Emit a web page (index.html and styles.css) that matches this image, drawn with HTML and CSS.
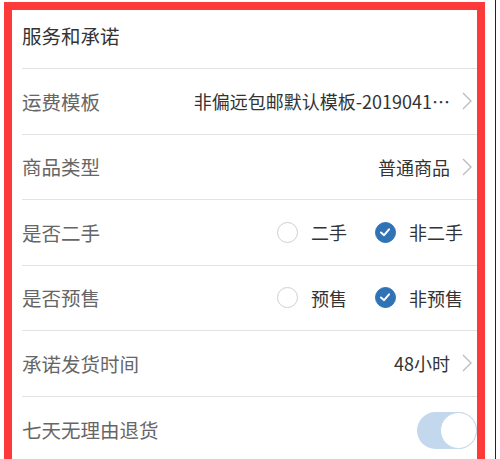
FILE: index.html
```html
<!DOCTYPE html>
<html lang="zh-CN">
<head>
    <meta charset="UTF-8">
    <meta name="viewport" content="width=device-width, initial-scale=1.0">
    <title>服务和承诺</title>
    <link rel="stylesheet" href="styles.css">
</head>
<body>
    <div class="page">
        <div class="frame">
            <div class="section-title">服务和承诺</div>

            <!-- Shipping template -->
            <div class="row">
                <span class="label">运费模板</span>
                <span class="value">
                    <span class="value-text">非偏远包邮默认模板-2019041…</span>
                    <svg class="chevron" viewBox="0 0 10 18"><polyline points="1,1 9,9 1,17" /></svg>
                </span>
            </div>

            <!-- Goods type -->
            <div class="row">
                <span class="label">商品类型</span>
                <span class="value">
                    <span class="value-text">普通商品</span>
                    <svg class="chevron" viewBox="0 0 10 18"><polyline points="1,1 9,9 1,17" /></svg>
                </span>
            </div>

            <!-- Second hand -->
            <div class="row">
                <span class="label">是否二手</span>
                <span class="radios">
                    <span class="radio"><i class="dot"></i>二手</span>
                    <span class="radio"><i class="dot checked"><svg viewBox="0 0 20 20"><polyline points="5.5,10.5 9,13.5 14.5,7" /></svg></i>非二手</span>
                </span>
            </div>

            <!-- Presale -->
            <div class="row">
                <span class="label">是否预售</span>
                <span class="radios">
                    <span class="radio"><i class="dot"></i>预售</span>
                    <span class="radio"><i class="dot checked"><svg viewBox="0 0 20 20"><polyline points="5.5,10.5 9,13.5 14.5,7" /></svg></i>非预售</span>
                </span>
            </div>

            <!-- Delivery time -->
            <div class="row">
                <span class="label">承诺发货时间</span>
                <span class="value">
                    <span class="value-text">48小时</span>
                    <svg class="chevron" viewBox="0 0 10 18"><polyline points="1,1 9,9 1,17" /></svg>
                </span>
            </div>

            <!-- 7 day return -->
            <div class="row last">
                <span class="label">七天无理由退货</span>
                <span class="toggle"><i class="knob"></i></span>
            </div>
        </div>
    </div>
</body>
</html>
```

FILE: styles.css
```css
/* Reset */
* {
    box-sizing: border-box;
    margin: 0;
    padding: 0;
}

body {
    font-family: "Noto Sans CJK SC", "Noto Sans", sans-serif;
    background-color: #fff;
    color: #333;
    height: 459px;
    overflow: hidden;
}

.page {
    width: 496px;
    height: 459px;
    overflow: hidden;
    border-right: 1px solid #222;
    padding: 2px 0 0 4px;
}

/* Red outline */
.frame {
    width: 481px;
    height: 457px;
    overflow: hidden;
    border: 8px solid #fc3a3a;
    border-bottom: none;
    padding-left: 10px;
}

.section-title {
    height: 59px;
    line-height: 52px;
    font-size: 19.5px;
    color: #333;
    border-bottom: 1px solid #e3e3e3;
}

/* Rows */
.row {
    display: flex;
    justify-content: space-between;
    align-items: center;
    height: 65.5px;
    border-bottom: 1px solid #e3e3e3;
    padding-right: 5px;
}

.row.last {
    border-bottom: none;
    padding-right: 0;
}

.label {
    font-size: 19.5px;
    color: #666;
    white-space: nowrap;
}

.value {
    display: flex;
    align-items: center;
    gap: 12px;
}

.value-text {
    font-size: 18px;
    color: #333;
    white-space: nowrap;
}

.chevron {
    width: 10px;
    height: 18px;
    flex-shrink: 0;
}

.chevron polyline {
    fill: none;
    stroke: #bdbdbd;
    stroke-width: 1.4;
}

/* Radio buttons */
.radios {
    display: flex;
    align-items: center;
    gap: 28px;
    padding-right: 9px;
}

.radio {
    display: flex;
    align-items: center;
    gap: 13px;
    font-size: 18px;
    color: #333;
}

.dot {
    display: block;
    width: 21px;
    height: 21px;
    border-radius: 50%;
    border: 1.5px solid #cfcfcf;
}

.dot.checked {
    background-color: #2f72b6;
    border-color: #2f72b6;
}

.dot svg {
    display: block;
    width: 18px;
    height: 18px;
}

.dot svg polyline {
    fill: none;
    stroke: #fff;
    stroke-width: 2.2;
    stroke-linecap: round;
    stroke-linejoin: round;
}

/* Switch */
.toggle {
    display: flex;
    justify-content: flex-end;
    width: 60px;
    height: 37px;
    border-radius: 19px;
    background-color: #c3d8ec;
    margin-top: 3px;
}

.knob {
    display: block;
    width: 37px;
    height: 37px;
    border-radius: 50%;
    background-color: #fff;
    border: 1.5px solid #c3d8ec;
}
```
